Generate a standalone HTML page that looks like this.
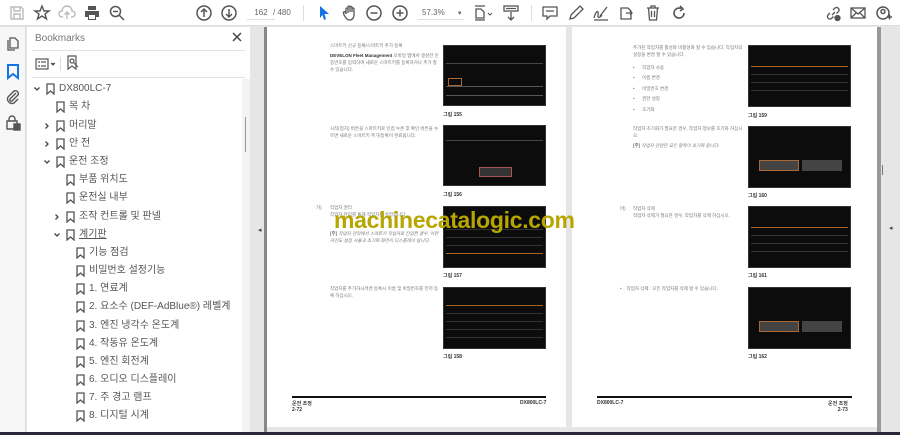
<!DOCTYPE html>
<html><head><meta charset="utf-8"><style>
*{margin:0;padding:0;box-sizing:border-box}
body{width:900px;height:435px;overflow:hidden;background:#e6e6e6;font-family:"Liberation Sans","Noto Sans CJK KR",sans-serif;position:relative}
.abs{position:absolute}
#tb{left:0;top:0;width:900px;height:26px;background:#fff;border-bottom:1px solid #ddd}
.ic{position:absolute;top:4px}
#strip{left:0;top:27px;width:26px;height:405px;background:#f7f7f7;border-right:1px solid #ddd}
#panel{left:27px;top:27px;width:223px;height:405px;background:#fff}
.bm{position:absolute;font-size:10px;color:#555;white-space:nowrap;line-height:12px}
.bmi{position:absolute;width:9px;height:12px}
.chev{position:absolute}
.page{background:#fff;position:absolute}
.t{position:absolute;font-size:4.5px;color:#777;line-height:7px}
.scr{position:absolute;background:#0c0c0c;border:1px solid #333}
.cap{position:absolute;font-size:5px;color:#333;font-weight:bold}
.row{position:absolute;left:2px;right:2px;height:1px;background:#333}
</style></head><body>
<svg width="0" height="0" style="position:absolute"><defs>
<symbol id="bk" viewBox="0 0 9 12"><path d="M1 1H8V11L4.5 8L1 11Z" fill="none" stroke="#555" stroke-width="1.3"/></symbol>
<symbol id="cd" viewBox="0 0 8 8"><path d="M1.5 2.5L4 5L6.5 2.5" fill="none" stroke="#444" stroke-width="1.3"/></symbol>
<symbol id="cr" viewBox="0 0 8 8"><path d="M2.5 1.5L5 4L2.5 6.5" fill="none" stroke="#444" stroke-width="1.3"/></symbol>
</defs></svg>
<div id="tb" class="abs">
<svg class="ic" style="left:8px" width="18" height="18" viewBox="0 0 18 18" fill="none" stroke="#bbb" stroke-width="1.4"><path d="M3 3H13L15 5V15H3Z M6 3V7H12V3 M6 15V10H12V15"/></svg>
<svg class="ic" style="left:33px" width="18" height="18" viewBox="0 0 18 18" fill="none" stroke="#555" stroke-width="1.4"><path d="M9 2L11 7H16L12 10L13.5 15L9 12L4.5 15L6 10L2 7H7Z"/></svg>
<svg class="ic" style="left:58px" width="18" height="18" viewBox="0 0 18 18" fill="none" stroke="#bbb" stroke-width="1.4"><path d="M5 13H4A3 3 0 0 1 4 7A5 5 0 0 1 14 7A3 3 0 0 1 14 13H13 M9 15V8 M6.5 10.5L9 8L11.5 10.5"/></svg>
<svg class="ic" style="left:83px" width="18" height="18" viewBox="0 0 18 18" fill="#555"><path d="M5 2H13V6H5Z M2 7H16V13H13V16H5V13H2Z"/><rect x="6" y="11" width="6" height="4" fill="#fff"/></svg>
<svg class="ic" style="left:108px" width="18" height="18" viewBox="0 0 18 18" fill="none" stroke="#555" stroke-width="1.5"><circle cx="7.5" cy="7.5" r="5"/><path d="M11 11L16 16 M5 7.5H10"/></svg>
<svg class="ic" style="left:195px" width="18" height="18" viewBox="0 0 18 18" fill="none" stroke="#555" stroke-width="1.5"><circle cx="9" cy="9" r="7"/><path d="M9 13V5 M6 8L9 5L12 8"/></svg>
<svg class="ic" style="left:220px" width="18" height="18" viewBox="0 0 18 18" fill="none" stroke="#555" stroke-width="1.5"><circle cx="9" cy="9" r="7"/><path d="M9 5V13 M6 10L9 13L12 10"/></svg>
<div class="abs" style="left:247px;top:6px;width:28px;height:14px;border-bottom:1px solid #ddd;font-size:8px;color:#666;text-align:center;line-height:14px">162</div>
<div class="abs" style="left:273px;top:6px;font-size:8px;color:#666;line-height:14px">/ 480</div>
<div class="abs" style="left:303px;top:5px;width:1px;height:16px;background:#ddd"></div>
<svg class="ic" style="left:316px" width="16" height="18" viewBox="0 0 16 18"><path d="M4 2L13 10H8.5L10 15L8 16L6.5 11L4 14Z" fill="#1473e6"/></svg>
<svg class="ic" style="left:341px" width="18" height="18" viewBox="0 0 18 18" fill="none" stroke="#555" stroke-width="1.3"><path d="M5 10V5A1 1 0 0 1 7 5V9 M7 8V3A1 1 0 0 1 9 3V8 M9 8V3.5A1 1 0 0 1 11 3.5V8 M11 8V5A1 1 0 0 1 13 5V11C13 14 11 16 8.5 16C6 16 5 14 3 11L2.5 9A1 1 0 0 1 4.5 8.5L5 10"/></svg>
<svg class="ic" style="left:365px" width="18" height="18" viewBox="0 0 18 18" fill="none" stroke="#555" stroke-width="1.5"><circle cx="9" cy="9" r="7"/><path d="M5.5 9H12.5"/></svg>
<svg class="ic" style="left:391px" width="18" height="18" viewBox="0 0 18 18" fill="none" stroke="#555" stroke-width="1.5"><circle cx="9" cy="9" r="7"/><path d="M5.5 9H12.5 M9 5.5V12.5"/></svg>
<div class="abs" style="left:418px;top:6px;width:46px;height:14px;border-bottom:1px solid #ddd;font-size:8px;color:#666;line-height:14px;padding-left:4px">57.3%<span style="margin-left:12px;font-size:6px">▼</span></div>
<svg class="ic" style="left:472px" width="22" height="18" viewBox="0 0 22 18" fill="none" stroke="#555" stroke-width="1.3"><path d="M3 2H13 M3 16H13 M4 5V14H12V8L9 5Z"/><path d="M16 9L18 11L20 9" stroke-width="1"/></svg>
<svg class="ic" style="left:502px" width="18" height="18" viewBox="0 0 18 18" fill="none" stroke="#555" stroke-width="1.3"><rect x="2" y="2" width="14" height="5"/><path d="M4 4.5H14 M9 8V16 M6 13L9 16L12 13"/></svg>
<div class="abs" style="left:531px;top:5px;width:1px;height:16px;background:#ddd"></div>
<svg class="ic" style="left:541px" width="18" height="18" viewBox="0 0 18 18" fill="none" stroke="#555" stroke-width="1.3"><path d="M2 3H16V12H9L6 15V12H2Z M5 7H13"/></svg>
<svg class="ic" style="left:567px" width="18" height="18" viewBox="0 0 18 18" fill="none" stroke="#555" stroke-width="1.3"><path d="M3 15L4 11L13 2L16 5L7 14Z"/></svg>
<svg class="ic" style="left:592px" width="18" height="18" viewBox="0 0 18 18" fill="none" stroke="#555" stroke-width="1.3"><path d="M2 14C4 6 7 6 6 11C5 15 9 13 10 11 M8 12L15 3 M2 16H16"/></svg>
<svg class="ic" style="left:618px" width="18" height="18" viewBox="0 0 18 18" fill="none" stroke="#555" stroke-width="1.3"><path d="M3 4H10L13 7V15H3Z M8 9L14 9 M12 7L14 9L12 11"/></svg>
<svg class="ic" style="left:644px" width="18" height="18" viewBox="0 0 18 18" fill="none" stroke="#555" stroke-width="1.3"><path d="M3 4H15 M7 4V2H11V4 M4.5 4L5.5 16H12.5L13.5 4 M7.5 7V13 M10.5 7V13"/></svg>
<svg class="ic" style="left:670px" width="18" height="18" viewBox="0 0 18 18" fill="none" stroke="#555" stroke-width="1.6"><path d="M14 9A5 5 0 1 1 11 4.5 M10 2L13 5L10 7"/></svg>
<svg class="ic" style="left:824px" width="18" height="18" viewBox="0 0 18 18" fill="none" stroke="#555" stroke-width="1.3"><path d="M8 11L11 8 M6 9L4 11A2.5 2.5 0 0 0 7.5 14.5L9.5 12.5 M9 6L11 4A2.5 2.5 0 0 1 14.5 7.5L12.5 9.5"/><circle cx="13.5" cy="14" r="2.5" fill="#555"/></svg>
<svg class="ic" style="left:849px" width="18" height="18" viewBox="0 0 18 18" fill="none" stroke="#555" stroke-width="1.3"><rect x="2" y="4" width="14" height="10"/><path d="M2 4L9 10L16 4 M2 14L7 9 M16 14L11 9"/></svg>
<svg class="ic" style="left:875px" width="18" height="18" viewBox="0 0 18 18" fill="none" stroke="#555" stroke-width="1.5"><circle cx="8" cy="9" r="6"/><circle cx="8" cy="7.5" r="2"/><path d="M12 13H17 M14.5 10.5V15.5"/></svg>
</div>
<div id="strip" class="abs">
<svg class="abs" style="left:5px;top:8px" width="16" height="16" viewBox="0 0 16 16" fill="none" stroke="#555" stroke-width="1.3"><path d="M5 3H10L13 6V13H5Z M3 5V15H10"/></svg>
<svg class="abs" style="left:6px;top:37px" width="14" height="16" viewBox="0 0 14 16" fill="none" stroke="#1473e6" stroke-width="2"><path d="M2 1H12V14L7 10L2 14Z"/></svg>
<svg class="abs" style="left:5px;top:62px" width="16" height="16" viewBox="0 0 16 16" fill="none" stroke="#555" stroke-width="1.4"><path d="M11 4L5 10A1.5 1.5 0 0 0 7 12L13 6A3 3 0 0 0 9 2L3 8A4.5 4.5 0 0 0 9 14L13 10"/></svg>
<svg class="abs" style="left:5px;top:88px" width="16" height="16" viewBox="0 0 16 16" fill="none" stroke="#555" stroke-width="1.4"><path d="M4 6V4A3 3 0 0 1 10 4V6 M2 6H12V14H2Z"/><rect x="9" y="9" width="6" height="6" fill="#555"/></svg>
</div>
<div id="panel" class="abs">
<div class="bm" style="left:8px;top:6px;font-size:10px;color:#777">Bookmarks</div>
<svg class="abs" style="left:204px;top:4px" width="12" height="12" viewBox="0 0 12 12" stroke="#444" stroke-width="1.5"><path d="M2 2L10 10 M10 2L2 10"/></svg>
<div class="abs" style="left:5px;top:23px;width:213px;height:1px;background:#e3e3e3"></div>
<svg class="abs" style="left:8px;top:30px" width="22" height="14" viewBox="0 0 22 14" fill="none" stroke="#555" stroke-width="1.2"><rect x="1" y="2" width="12" height="10"/><path d="M3 5H5 M6 5H11 M3 9H5 M6 9H11"/><path d="M16 6L18 8L20 6" fill="#555"/></svg>
<div class="abs" style="left:33px;top:30px;width:1px;height:14px;background:#ddd"></div>
<svg class="abs" style="left:39px;top:28px" width="14" height="16" viewBox="0 0 14 16" fill="none" stroke="#555" stroke-width="1.2"><path d="M2 1H10V14L6 11L2 14Z"/><circle cx="6" cy="6" r="2"/><path d="M8 8L12 12"/></svg>
<div class="abs" style="left:5px;top:50px;width:213px;height:1px;background:#e3e3e3"></div>
<div class="abs" style="left:215px;top:52px;width:8px;height:353px;background:#f3f3f3"></div>
<div class="abs" style="left:218px;top:90px;width:1px;height:35px;background:#999"></div>
</div>
<div class="abs" style="left:250px;top:27px;width:15px;height:405px;background:#e6e6e6"></div>
<div class="abs" style="left:264px;top:27px;width:3px;height:405px;background:#888"></div>

<div class="page" style="left:267px;top:27px;width:299px;height:400px"></div>
<div class="page" style="left:572px;top:27px;width:305px;height:400px"></div>
<div class="abs" style="left:877px;top:27px;width:4px;height:405px;background:#999"></div>
<div class="abs" style="left:882px;top:165px;width:1px;height:10px;background:#777"></div>
<div class="abs" style="left:258px;top:226px;font-size:7px;color:#444">◂</div>
<div class="abs" style="left:889px;top:224px;font-size:7px;color:#444">◂</div>
<div class="abs" style="left:0;top:432px;width:900px;height:3px;background:#2a2838"></div>

<div class="t" style="left:330px;top:42px">스마트키 신규 등록/스마트키 추가 등록</div>
<div class="t" style="left:330px;top:52px;width:110px"><b style="color:#333">DEVELON Fleet Management</b> 모바일 앱에서 생성한 인증번호를 입력하여 새로운 스마트키를 등록하거나 추가 할 수 있습니다.</div>
<div class="t" style="left:330px;top:125px;width:110px">시작(정지) 버튼을 스마트키로 인접 누른 후 확인 버튼을 누르면 새로운 스마트키 추가/등록이 완료됩니다.</div>
<div class="t" style="left:316px;top:204px">가)</div>
<div class="t" style="left:330px;top:204px;width:110px">작업자 권리<br>작업자 관리를 통해 작업자를 설정합니다.</div>
<div class="t" style="left:330px;top:230px;width:110px"><b>[주]</b> <i>작업자 관리에서 스마트키 작업자로 진입한 경우, 어떤자진도 설정 사용과 초기화 화면이 디스플레이 됩니다.</i></div>
<div class="t" style="left:330px;top:285px;width:110px">작업자를 추가하시려면 등록시 이름 및 비밀번호를 먼저 등록 하십시오.</div>
<div class="t" style="left:633px;top:44px;width:110px">추가된 작업자를 활성화 비활성화 할 수 있습니다. 작업자의 설정을 변경 할 수 있습니다.</div>
<div class="t" style="left:633px;top:63px;line-height:10.4px">•&nbsp;&nbsp;&nbsp;&nbsp;&nbsp;&nbsp;작업자 사용<br>•&nbsp;&nbsp;&nbsp;&nbsp;&nbsp;&nbsp;이름 변경<br>•&nbsp;&nbsp;&nbsp;&nbsp;&nbsp;&nbsp;비밀번호 변경<br>•&nbsp;&nbsp;&nbsp;&nbsp;&nbsp;&nbsp;권한 설정<br>•&nbsp;&nbsp;&nbsp;&nbsp;&nbsp;&nbsp;초기화</div>
<div class="t" style="left:633px;top:125px;width:110px">작업자 초기화가 필요한 경우, 작업자 정보를 초기화 하십시오.</div>
<div class="t" style="left:633px;top:142px;width:115px"><b>[주]</b> <i>작업자 관련된 모든 항목이 초기화 됩니다.</i></div>
<div class="t" style="left:620px;top:205px">마)</div>
<div class="t" style="left:633px;top:205px;width:110px">작업자 삭제<br>작업자 삭제가 필요한 경우, 작업자를 삭제 하십시오.</div>
<div class="t" style="left:620px;top:285px;width:125px">•&nbsp;&nbsp;&nbsp;&nbsp;작업자 삭제 : 모든 작업자를 삭제 할 수 있습니다.</div>

<div class="scr" style="left:443px;top:45px;width:103px;height:61px"><div class="row" style="top:17px;background:#444"></div><div class="row" style="top:40px;background:#555"></div><div class="row" style="top:49px;background:#555"></div><div class="abs" style="left:4px;top:32px;width:14px;height:8px;border:1px solid #a63"></div></div>
<div class="scr" style="left:443px;top:125px;width:103px;height:61px"><div class="row" style="top:14px;background:#444"></div><div class="abs" style="left:35px;top:41px;width:33px;height:10px;border:1px solid #a55;background:#333"></div></div>
<div class="scr" style="left:443px;top:206px;width:103px;height:62px"><div class="row" style="top:22px"></div><div class="row" style="top:30px"></div><div class="row" style="top:38px"></div><div class="row" style="top:46px;background:#a62"></div></div>
<div class="scr" style="left:443px;top:287px;width:103px;height:62px"><div class="row" style="top:17px;background:#a62"></div><div class="row" style="top:25px"></div><div class="row" style="top:33px"></div><div class="row" style="top:41px"></div><div class="row" style="top:49px"></div></div>
<div class="scr" style="left:748px;top:45px;width:103px;height:62px"><div class="row" style="top:20px;background:#a62"></div><div class="row" style="top:28px"></div><div class="row" style="top:36px"></div><div class="row" style="top:44px"></div></div>
<div class="scr" style="left:748px;top:126px;width:103px;height:62px"><div class="abs" style="left:10px;top:33px;width:40px;height:11px;background:#444;border:1px solid #a63"></div><div class="abs" style="left:53px;top:33px;width:40px;height:11px;background:#444"></div></div>
<div class="scr" style="left:748px;top:206px;width:103px;height:62px"><div class="row" style="top:20px;background:#a62"></div><div class="row" style="top:28px"></div><div class="row" style="top:36px"></div><div class="row" style="top:44px"></div></div>
<div class="scr" style="left:748px;top:287px;width:103px;height:62px"><div class="abs" style="left:10px;top:33px;width:40px;height:11px;background:#444;border:1px solid #a63"></div><div class="abs" style="left:53px;top:33px;width:40px;height:11px;background:#444"></div></div>
<div class="cap" style="left:443px;top:111px">그림 155</div>
<div class="cap" style="left:443px;top:191px">그림 156</div>
<div class="cap" style="left:443px;top:272px">그림 157</div>
<div class="cap" style="left:443px;top:353px">그림 158</div>
<div class="cap" style="left:748px;top:112px">그림 159</div>
<div class="cap" style="left:748px;top:192px">그림 160</div>
<div class="cap" style="left:748px;top:272px">그림 161</div>
<div class="cap" style="left:748px;top:353px">그림 162</div>
<div class="abs" style="left:292px;top:396px;width:254px;height:1.5px;background:#111"></div>
<div class="cap" style="left:292px;top:400px">운전 조정<br>2-72</div>
<div class="cap" style="left:520px;top:400px">DX800LC-7</div>
<div class="abs" style="left:597px;top:396px;width:255px;height:1.5px;background:#111"></div>
<div class="cap" style="left:597px;top:400px">DX800LC-7</div>
<div class="cap" style="left:828px;top:400px;text-align:right">운전 조정<br>2-73</div>
<div class="abs" style="left:334px;top:207px;font-size:23px;font-weight:bold;color:#b8a600;letter-spacing:-0.3px">machinecatalogic.com</div>

<svg class="chev" style="left:33px;top:85px" width="8" height="8"><use href="#cd"/></svg>
<svg class="bmi" style="left:46px;top:83px"><use href="#bk"/></svg><div class="bm" style="left:59px;top:83px">DX800LC-7</div>
<svg class="bmi" style="left:56px;top:101px"><use href="#bk"/></svg><div class="bm" style="left:69px;top:101px">목 차</div>
<svg class="chev" style="left:43px;top:122px" width="8" height="8"><use href="#cr"/></svg>
<svg class="bmi" style="left:56px;top:120px"><use href="#bk"/></svg><div class="bm" style="left:69px;top:120px">머리말</div>
<svg class="chev" style="left:43px;top:140px" width="8" height="8"><use href="#cr"/></svg>
<svg class="bmi" style="left:56px;top:138px"><use href="#bk"/></svg><div class="bm" style="left:69px;top:138px">안 전</div>
<svg class="chev" style="left:43px;top:158px" width="8" height="8"><use href="#cd"/></svg>
<svg class="bmi" style="left:56px;top:156px"><use href="#bk"/></svg><div class="bm" style="left:69px;top:156px">운전 조정</div>
<svg class="bmi" style="left:66px;top:174px"><use href="#bk"/></svg><div class="bm" style="left:79px;top:174px">부품 위치도</div>
<svg class="bmi" style="left:66px;top:192px"><use href="#bk"/></svg><div class="bm" style="left:79px;top:192px">운전실 내부</div>
<svg class="chev" style="left:53px;top:213px" width="8" height="8"><use href="#cr"/></svg>
<svg class="bmi" style="left:66px;top:211px"><use href="#bk"/></svg><div class="bm" style="left:79px;top:211px">조작 컨트롤 및 판넬</div>
<svg class="chev" style="left:53px;top:231px" width="8" height="8"><use href="#cd"/></svg>
<svg class="bmi" style="left:66px;top:229px"><use href="#bk"/></svg><div class="bm" style="left:79px;top:229px;text-decoration:underline">계기판</div>
<svg class="bmi" style="left:76px;top:247px"><use href="#bk"/></svg><div class="bm" style="left:89px;top:247px">기능 점검</div>
<svg class="bmi" style="left:76px;top:265px"><use href="#bk"/></svg><div class="bm" style="left:89px;top:265px">비밀번호 설정기능</div>
<svg class="bmi" style="left:76px;top:283px"><use href="#bk"/></svg><div class="bm" style="left:89px;top:283px">1. 연료계</div>
<svg class="bmi" style="left:76px;top:301px"><use href="#bk"/></svg><div class="bm" style="left:89px;top:301px">2. 요소수 (DEF-AdBlue®) 레벨계</div>
<svg class="bmi" style="left:76px;top:320px"><use href="#bk"/></svg><div class="bm" style="left:89px;top:320px">3. 엔진 냉각수 온도계</div>
<svg class="bmi" style="left:76px;top:338px"><use href="#bk"/></svg><div class="bm" style="left:89px;top:338px">4. 작동유 온도계</div>
<svg class="bmi" style="left:76px;top:356px"><use href="#bk"/></svg><div class="bm" style="left:89px;top:356px">5. 엔진 회전계</div>
<svg class="bmi" style="left:76px;top:374px"><use href="#bk"/></svg><div class="bm" style="left:89px;top:374px">6. 오디오 디스플레이</div>
<svg class="bmi" style="left:76px;top:392px"><use href="#bk"/></svg><div class="bm" style="left:89px;top:392px">7. 주 경고 램프</div>
<svg class="bmi" style="left:76px;top:410px"><use href="#bk"/></svg><div class="bm" style="left:89px;top:410px">8. 디지털 시계</div>
</body></html>
